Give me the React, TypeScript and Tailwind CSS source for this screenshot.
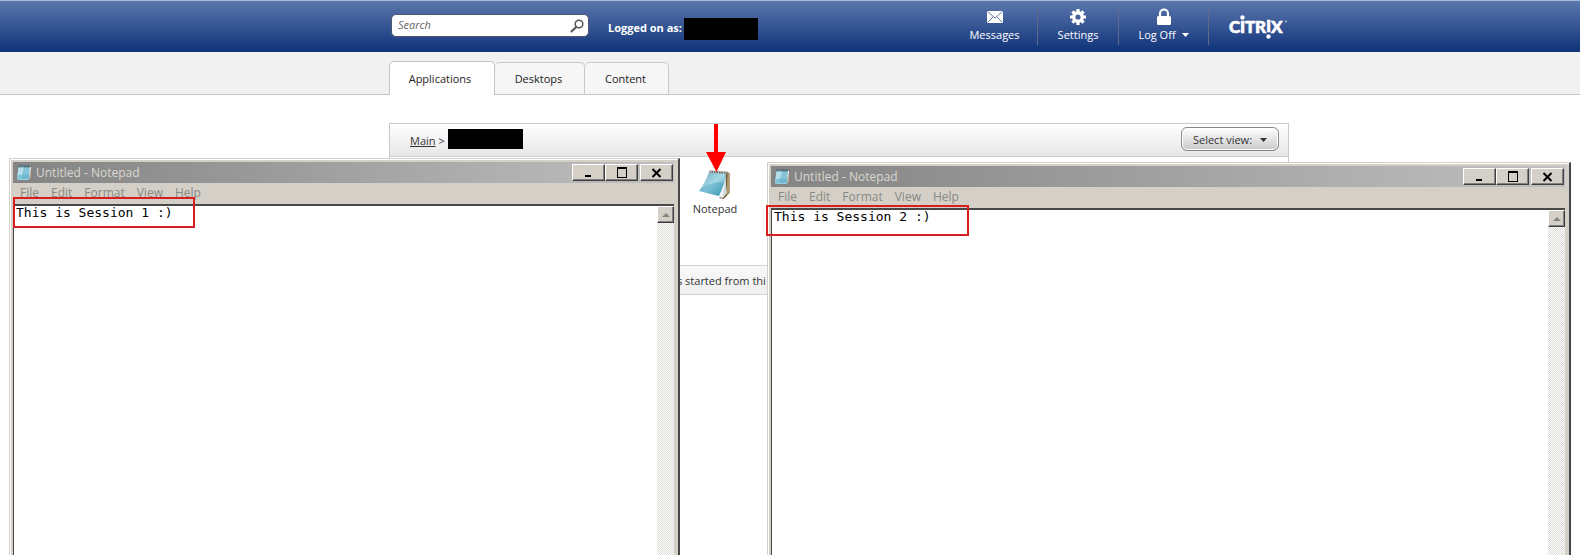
import React from 'react';
import clsx from 'clsx';

const menus = ['File', 'Edit', 'Format', 'View', 'Help'];

function NotepadIcon({ className }: { className?: string }) {
  return (
    <svg className={className} viewBox="0 0 16 16" aria-hidden="true">
      <path d="M3 2h12v10l-2.500 3H3z" fill="#f1f5f6" />
      <path d="M15 2.500v10L12.500 15z" fill="#b9a98a" />
      <path d="M2.500 1.500h11.500l-1.200 13H1z" fill="#86c5d9" />
      <path d="M2.500 1.500h5.500L5 14.500H1z" fill="#b5e0eb" />
      <path d="M2 10l11.300-1-.5 5.500H1z" fill="#5db0cb" opacity="0.6" />
      <path d="M3 .5v2M5 .5v2M7 .5v2M9 .5v2M11 .5v2M13 .5v2" stroke="#26414c" strokeWidth="1" />
    </svg>
  );
}

function NotepadLarge() {
  return (
    <svg className="h-8 w-8" viewBox="0 0 32 32" aria-hidden="true">
      <defs>
        <linearGradient id="page" x1="0" y1="0" x2="1" y2="1">
          <stop offset="0" stopColor="#6aa8bc" />
          <stop offset="0.5" stopColor="#a5d9e6" />
          <stop offset="1" stopColor="#3f9cbb" />
        </linearGradient>
      </defs>
      <path d="M27 3l3.500 1v20l-6 6-4-1z" fill="#6b5738" />
      <path d="M28.500 4l2 .5v19l-3 3.500z" fill="#b09a6e" />
      <path d="M26 4l1.500 20-3.500 5-15-4z" fill="#f4f7f9" />
      <path d="M26.500 6l1 18-4 5z" fill="#cfd9e0" />
      <path d="M10 3l17 1.500c-1 9-4 16-7 22.500L0 22C4 16 8 10 10 3z" fill="url(#page)" />
      <path d="M2 19.500C9 15 17 13 25.500 12.500c-1.500 5-3.500 9.500-5.500 14.500L0 22z" fill="#2f8fb0" opacity="0.35" />
      <path d="M10.500 1.500l18 1.200v2.200l-18-1.200z" fill="#77756e" />
      <path d="M12 1v3M14.500 1.200v3M17 1.400v3M19.500 1.600v3M22 1.800v3M24.500 2v3M27 2.200v3" stroke="#c9ced0" strokeWidth="0.800" />
    </svg>
  );
}

function CaptionButton({ label, className, children }: { label: string; className?: string; children: React.ReactNode }) {
  return (
    <button
      aria-label={label}
      className={clsx(
        'flex h-[17px] w-[33px] items-center justify-center border border-t-white border-r-[#404040] border-b-[#404040] border-l-white bg-[#d4d0c8] shadow-[inset_-1px_-1px_0_#808080]',
        className
      )}
    >
      <svg className="h-3 w-3" viewBox="0 0 12 12" fill="none" stroke="#000" shapeRendering="crispEdges">
        {children}
      </svg>
    </button>
  );
}

function NotepadWindow({ text, className, markClass }: { text: string; className: string; markClass: string }) {
  return (
    <section
      className={clsx(
        'absolute bottom-0 flex flex-col border-t border-r-2 border-l border-t-[#d4d0c8] border-r-[#484848] border-l-[#d4d0c8] bg-[#d4d0c8] pr-1 pl-[3px] shadow-[inset_1px_1px_0_#fff]',
        className
      )}
    >
      <div className="mt-[3px] flex h-[21px] shrink-0 items-center bg-linear-to-r from-[#848484] to-[#c0c0c0] pr-px pl-[3px]">
        <NotepadIcon className="h-4 w-4" />
        <h2 className="ml-1 flex-1 text-[12px] text-[#dad7d0]">Untitled - Notepad</h2>
        <CaptionButton label="Minimize">
          <path d="M2 9h6" strokeWidth="2" />
        </CaptionButton>
        <CaptionButton label="Maximize">
          <path d="M1 1h10" strokeWidth="2" />
          <path d="M1.500 1v9h9V1" />
        </CaptionButton>
        <CaptionButton label="Close" className="ml-0.5">
          <path d="M1.500 2l8 8M9.500 2l-8 8" strokeWidth="2" shapeRendering="auto" />
        </CaptionButton>
      </div>
      <nav className="flex h-[21px] shrink-0 items-center gap-3 pb-0.5 pl-[7px] text-[12px] text-[#8a8883]">
        {menus.map((menu) => (
          <button key={menu}>{menu}</button>
        ))}
      </nav>
      <div className="flex min-h-0 flex-1 border-t-2 border-l border-t-[#484848] border-l-[#484848] bg-white">
        <textarea
          aria-label="Document text"
          defaultValue={text}
          spellCheck={false}
          className="block flex-1 resize-none overflow-hidden bg-white pl-0.5 font-['DejaVu_Sans_Mono',monospace] text-[13px] leading-[14px] text-black outline-none"
        />
        <div className="w-[17px] bg-[repeating-conic-gradient(#dddbd6_0_25%,#ffffff_0_50%)] bg-size-[2px_2px]">
          <button
            aria-label="Scroll up"
            className="flex h-[17px] w-[17px] items-center justify-center border border-t-white border-r-[#404040] border-b-[#404040] border-l-white bg-[#d4d0c8] shadow-[inset_-1px_-1px_0_#808080]"
          >
            <svg className="h-1 w-2" viewBox="0 0 8 4" fill="#85837e">
              <path d="M4 0l4 4H0z" />
            </svg>
          </button>
        </div>
      </div>
      <div className={clsx('pointer-events-none absolute h-[31px] border-2 border-[#d81e1e]', markClass)} />
    </section>
  );
}

function HeaderItem({ label, icon, caret }: { label: string; icon: React.ReactNode; caret?: boolean }) {
  return (
    <button className="flex h-[37px] flex-col items-center border-r border-[#5f6a88] text-[11px] text-white">
      <svg className="h-[18px] w-[18px]" viewBox="0 0 18 18" fill="#fff" aria-hidden="true">
        {icon}
      </svg>
      <span className="flex items-center gap-1.5 leading-[18px]">
        {label}
        {caret && (
          <svg className="h-1 w-[7px]" viewBox="0 0 7 4" fill="#fff">
            <path d="M0 0h7L3.500 4z" />
          </svg>
        )}
      </span>
    </button>
  );
}

function CitrixLogo() {
  return (
    <svg className="h-6 w-[60px]" viewBox="0 0 60 24" fill="#fff" role="img" aria-label="Citrix">
      <g fontFamily="Lato, sans-serif" fontWeight="900" fontSize="17" stroke="#fff" strokeWidth="0.6">
        <text x="0" y="18">C</text>
        <text x="11" y="18">I</text>
        <text x="16" y="18">T</text>
        <text x="26" y="18">R</text>
        <text x="37" y="17">I</text>
        <text x="42" y="18">X</text>
      </g>
      <circle cx="13.500" cy="2.500" r="2.200" />
      <circle cx="39.500" cy="21.500" r="2.200" />
      <circle cx="57" cy="6.500" r="1" opacity="0.6" />
    </svg>
  );
}

export default function App() {
  return (
    <div className="relative flex min-h-screen flex-col overflow-hidden bg-white font-['Open_Sans','Noto_Sans',sans-serif] text-[11px] text-[#333]">
      <header className="h-[52px] border-t border-[#a3bbd6] bg-linear-to-b from-[#5b76ad] to-[#0f3379] pl-[389px]">
        <div className="flex w-[900px] items-start">
          <label className="mt-[13px] ml-[2px] flex h-[23px] w-[198px] items-center rounded-[5px] border border-[#50576b] bg-white px-1">
            <input type="text" placeholder="Search" aria-label="Search" className="min-w-0 flex-1 px-0.5 text-[11px] italic outline-none placeholder:text-[#666]" />
            <svg className="h-[14px] w-[14px]" viewBox="0 0 14 14" fill="none" stroke="#555" aria-hidden="true">
              <circle cx="9" cy="5" r="3.800" strokeWidth="1.500" />
              <path d="M6.200 8L1.500 12.500" strokeWidth="2" strokeLinecap="round" />
            </svg>
          </label>
          <div className="mt-4 ml-[19px] flex h-[22px] items-center gap-0.5 font-bold text-white">
            Logged on as:
            <span className="mt-0.5 h-[22px] w-[74px] bg-black" />
          </div>
          <div className="mt-[7px] ml-auto grid grid-cols-[86px_81px_90px] *:w-full">
            <HeaderItem
              label="Messages"
              icon={
                <>
                  <path d="M1 3h16v12H1z" />
                  <path d="M1.500 3.500L9 10l7.500-6.500M1.500 14.500L7 9M16.500 14.500L11 9" fill="none" stroke="#536ca0" strokeWidth="0.900" />
                </>
              }
            />
            <HeaderItem
              label="Settings"
              icon={
                <>
                  <circle cx="9" cy="9" r="4.300" fill="none" stroke="#fff" strokeWidth="3.400" />
                  <path d="M9 1v3M9 14v3M1 9h3M14 9h3M3.400 3.400l2 2M12.600 12.600l2 2M3.400 14.600l2-2M12.600 5.400l2-2" stroke="#fff" strokeWidth="3.200" />
                </>
              }
            />
            <HeaderItem
              label="Log Off"
              caret
              icon={
                <>
                  <rect x="2" y="8" width="14" height="9" rx="1.500" />
                  <path d="M5 9V5.500a4 4 0 018 0V9" fill="none" stroke="#fff" strokeWidth="2.200" />
                </>
              }
            />
          </div>
          <div className="mt-[14px] ml-5">
            <CitrixLogo />
          </div>
        </div>
      </header>

      <nav className="flex h-[43px] items-end border-b border-[#c4c4c4] bg-[#f1f1f1] pl-[389px] text-[#222]">
        <a href="#applications" className="-mb-px flex h-[34px] w-[106px] items-center justify-center rounded-t-[5px] border border-b-0 border-[#c4c4c4] bg-white pr-1 pt-0.5">
          Applications
        </a>
        <a href="#desktops" className="flex h-8 w-[90px] items-center justify-center rounded-t-[5px] border border-b-0 border-l-0 border-[#c9c9c9] bg-[#f6f6f6] pr-0.5 pt-0.5">
          Desktops
        </a>
        <a href="#content" className="flex h-8 w-[84px] items-center justify-center rounded-t-[5px] border border-b-0 border-l-0 border-[#c9c9c9] bg-[#f6f6f6] pr-0.5 pt-0.5">
          Content
        </a>
      </nav>

      <main className="mt-7 ml-[389px] w-[900px] flex-1 border border-b-0 border-[#c9c9c9]">
        <div className="flex h-[33px] items-center border-b border-[#cfcfcf] bg-linear-to-b from-white to-[#e6e6e6] pr-[9px] pl-5">
          <a href="#main" className="pt-0.5 underline">Main</a>
          <span className="mx-[3px] pt-0.5">&gt;</span>
          <span className="-mt-0.5 h-5 w-[75px] bg-black" />
          <button className="-mt-0.5 ml-auto flex h-6 w-[98px] items-center justify-center gap-2 rounded-[6px] border border-[#888] bg-linear-to-b from-white to-[#c9cacd] pt-0.5 shadow-[inset_0_0_0_1px_#fff]">
            Select view:
            <svg className="h-1 w-[7px]" viewBox="0 0 7 4" fill="#333">
              <path d="M0 0h7L3.500 4z" />
            </svg>
          </button>
        </div>
        <a href="#notepad" className="mt-3 ml-[300px] flex w-[50px] flex-col items-center">
          <NotepadLarge />
          <span>Notepad</span>
        </a>
        <p className="mt-[47px] h-[30px] border-y border-[#d2d2d2] bg-linear-to-b from-[#f8f8f8] to-[#f0f0f0] pl-[287px] leading-[30px]">
          s started from thi
        </p>
      </main>

      <svg className="absolute top-[124px] left-[706px] h-12 w-5" viewBox="0 0 20 48" fill="#f00" aria-hidden="true">
        <path d="M8 0h4v28h8L10.500 48 0 28h8z" />
      </svg>

      <NotepadWindow text="This is Session 1 :)" className="top-[158px] left-[9px] w-[671px]" markClass="top-[38px] left-[3px] w-[182px]" />
      <NotepadWindow text="This is Session 2 :)" className="top-[162px] left-[767px] w-[804px]" markClass="top-[42px] -left-0.5 w-[203px]" />
    </div>
  );
}
